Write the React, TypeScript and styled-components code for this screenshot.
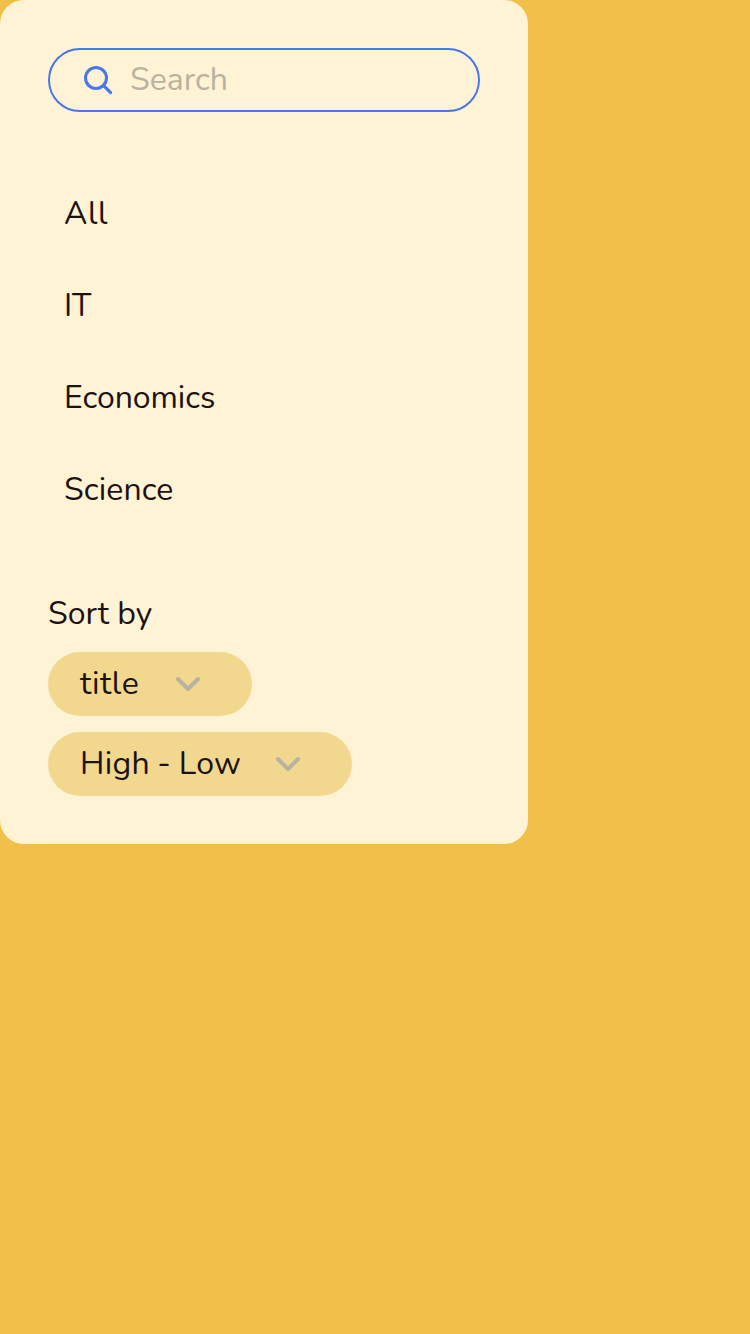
import React from "react";
import styled, { createGlobalStyle } from "styled-components";

const GlobalStyle = createGlobalStyle`
  *, *::before, *::after { box-sizing: border-box; }
  body {
    margin: 0;
    min-height: 100vh;
    background: #f1c04a;
    color: #1c1211;
    font-family: Nunito, Lato, sans-serif;
    font-size: 32px;
    line-height: 44px;
  }
`;

const Sidebar = styled.aside`
  display: flex;
  flex-direction: column;
  width: 528px;
  height: 844px;
  padding: 48px;
  border-radius: 24px;
  background: #fff3d6;
`;

const SearchField = styled.label`
  display: flex;
  align-items: center;
  gap: 16px;
  height: 64px;
  padding: 0 30px 0 32px;
  border: 2px solid #4776f0;
  border-radius: 32px;
`;

const SearchIcon = styled.svg`
  flex: none;
  width: 32px;
  height: 32px;
`;

const Label = styled.span<{ $spacing?: number; $wordSpacing?: number }>`
  letter-spacing: ${(p) => p.$spacing ?? 0}px;
  word-spacing: ${(p) => p.$wordSpacing ?? 0}px;
  white-space: nowrap;
`;

const Placeholder = styled(Label)`
  color: #b8b2a0;
`;

const Categories = styled.nav`
  display: flex;
  flex-direction: column;
  margin-top: 56px;
`;

const Category = styled.div`
  display: flex;
  align-items: center;
  height: 92px;
  padding-left: 16px;
`;

const SortGroup = styled.section`
  display: flex;
  flex-direction: column;
  align-items: flex-start;
  gap: 16px;
  margin-top: 56px;
`;

const Select = styled.button<{ $width: number }>`
  display: flex;
  align-items: center;
  justify-content: space-between;
  width: ${(p) => p.$width}px;
  height: 64px;
  padding: 0 48px 0 32px;
  border: 0;
  border-radius: 32px;
  background: #f2d78f;
  color: inherit;
  font: inherit;
`;

const Chevron = styled.svg`
  flex: none;
  width: 32px;
  height: 32px;
`;

const categories = [
  { name: "All", spacing: 0.6 },
  { name: "IT", spacing: -0.3 },
  { name: "Economics", spacing: -0.05 },
  { name: "Science", spacing: 0.12 },
];

const selects = [
  { value: "title", width: 204, spacing: 0.55, wordSpacing: 0 },
  { value: "High - Low", width: 304, spacing: 0.3, wordSpacing: -1.1 },
];

export default function App() {
  return (
    <>
      <GlobalStyle />
      <Sidebar>
        <SearchField>
          <SearchIcon viewBox="0 0 32 32" fill="none" stroke="#4776f0" strokeWidth="3" strokeLinecap="round">
            <circle cx="14" cy="14" r="10.5" />
            <path d="M21.6 21.6 28.6 28.6" />
          </SearchIcon>
          <Placeholder>Search</Placeholder>
        </SearchField>
        <Categories>
          {categories.map((c) => (
            <Category key={c.name}>
              <Label $spacing={c.spacing}>{c.name}</Label>
            </Category>
          ))}
        </Categories>
        <SortGroup>
          <Label>Sort by</Label>
          {selects.map((s) => (
            <Select key={s.value} $width={s.width}>
              <Label $spacing={s.spacing} $wordSpacing={s.wordSpacing}>
                {s.value}
              </Label>
              <Chevron viewBox="0 0 32 32" fill="none" stroke="#b8b2a0" strokeWidth="4" strokeLinecap="round" strokeLinejoin="round">
                <path d="M6 11 16 21 26 11" />
              </Chevron>
            </Select>
          ))}
        </SortGroup>
      </Sidebar>
    </>
  );
}
